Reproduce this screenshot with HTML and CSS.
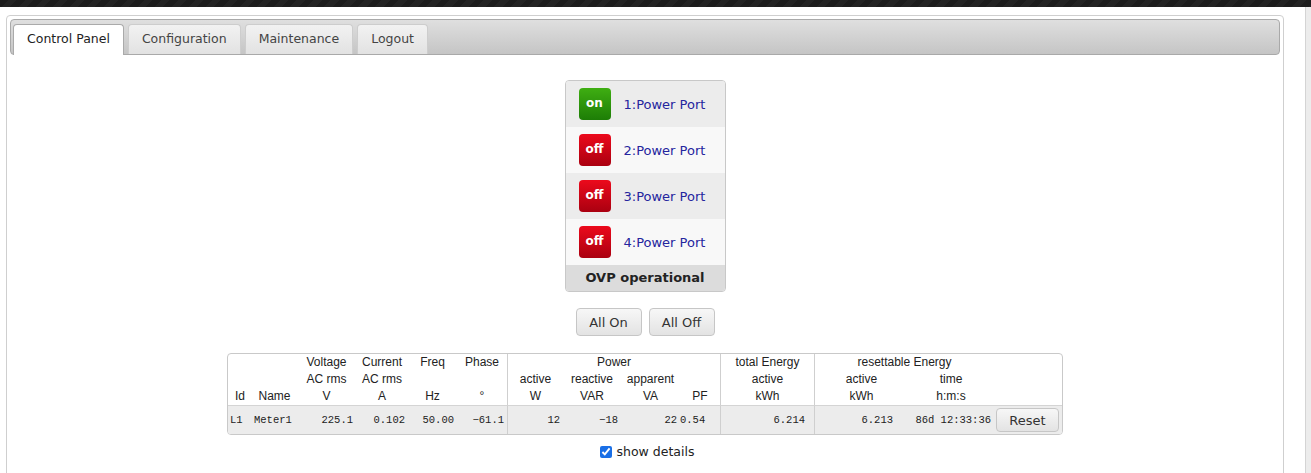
FILE: index.html
```html
<!DOCTYPE html>
<html>
<head>
<meta charset="utf-8">
<title>Control Panel</title>
<link rel="stylesheet" href="styles.css">
</head>
<body>
<div class="topbar"></div>
<div class="sidestrip"></div>
<div class="page">
  <ul class="tabnav">
    <li class="tab active">Control Panel</li>
    <li class="tab">Configuration</li>
    <li class="tab">Maintenance</li>
    <li class="tab">Logout</li>
  </ul>
  <div class="panel">
    <div class="ports">
      <div class="port odd"><span class="sw on">on</span><span class="pname">1:Power Port</span></div>
      <div class="port"><span class="sw off">off</span><span class="pname">2:Power Port</span></div>
      <div class="port odd"><span class="sw off">off</span><span class="pname">3:Power Port</span></div>
      <div class="port"><span class="sw off">off</span><span class="pname">4:Power Port</span></div>
      <div class="status">OVP operational</div>
    </div>
    <div class="allbtns">
      <button class="btn">All On</button>
      <button class="btn">All Off</button>
    </div>
    <div class="meter">
      <table class="mtable">
        <colgroup>
          <col class="c-id"><col class="c-name"><col class="c-v"><col class="c-a"><col class="c-hz"><col class="c-ph">
          <col class="c-w"><col class="c-var"><col class="c-va"><col class="c-pf">
          <col class="c-tot"><col class="c-rkwh"><col class="c-time"><col class="c-reset">
        </colgroup>
        <thead>
          <tr>
            <th></th><th></th><th>Voltage</th><th>Current</th><th>Freq</th><th>Phase</th>
            <th class="sep" colspan="4">Power</th>
            <th class="sep">total Energy</th>
            <th class="sep" colspan="2">resettable Energy</th>
            <th></th>
          </tr>
          <tr>
            <th></th><th></th><th>AC rms</th><th>AC rms</th><th></th><th></th>
            <th class="sep">active</th><th>reactive</th><th>apparent</th><th></th>
            <th class="sep">active</th>
            <th class="sep">active</th><th>time</th>
            <th></th>
          </tr>
          <tr>
            <th>Id</th><th>Name</th><th>V</th><th>A</th><th>Hz</th><th>°</th>
            <th class="sep">W</th><th>VAR</th><th>VA</th><th>PF</th>
            <th class="sep">kWh</th>
            <th class="sep">kWh</th><th>h:m:s</th>
            <th></th>
          </tr>
        </thead>
        <tbody>
          <tr>
            <td class="left">L1</td><td class="left">Meter1</td><td>225.1</td><td>0.102</td><td>50.00</td><td>&minus;61.1</td>
            <td class="sep">12</td><td>&minus;18</td><td>22</td><td class="pf">0.54</td>
            <td class="sep tot">6.214</td>
            <td class="sep rk">6.213</td><td>86d 12:33:36</td>
            <td class="left rs"><button class="btn reset">Reset</button></td>
          </tr>
        </tbody>
      </table>
    </div>
    <label class="details"><input type="checkbox" checked>show details</label>
  </div>
</div>
</body>
</html>
```

FILE: styles.css
```css
html, body {
  margin: 0;
  padding: 0;
  background: #fff;
  overflow: hidden;
}
body {
  font-family: "DejaVu Sans", Verdana, sans-serif;
  font-size: 13px;
  color: #222;
}
.topbar {
  height: 7px;
  background: repeating-linear-gradient(135deg, #1c1c1c 0 6px, #232323 6px 12px);
}
.sidestrip {
  position: fixed;
  top: 7px;
  right: 0;
  bottom: 0;
  width: 5px;
  background: #ececec;
  border-left: 1px solid #d4d4d4;
}
.page {
  margin: 8px 27px 0 6px;
  border: 1px solid #cfcfcf;
  border-radius: 4px;
  padding: 3px;
  min-height: 520px;
}
.tabnav {
  list-style: none;
  margin: 0;
  padding: 4px 2px 0;
  height: 30px;
  display: flex;
  align-items: flex-start;
  gap: 4px;
  border: 1px solid #a9a9a9;
  border-radius: 4px;
  background: linear-gradient(#dfdfdf, #c5c5c5);
}
.tab {
  box-sizing: border-box;
  height: 30px;
  padding: 0 13px;
  line-height: 28px;
  font-size: 12.5px;
  color: #444;
  border: 1px solid #cdcdcd;
  border-bottom: 0;
  border-radius: 4px 4px 0 0;
  background: linear-gradient(#f2f2f2, #e2e2e2);
}
.tab.active {
  height: 31px;
  color: #222;
  background: #fff;
  border-color: #aaa;
}
.panel {
  display: flex;
  flex-direction: column;
  align-items: center;
  padding-top: 25px;
}
.ports {
  box-sizing: border-box;
  width: 161px;
  border: 1px solid #c8c8c8;
  border-radius: 4px;
  overflow: hidden;
  background: #f8f8f8;
}
.port {
  box-sizing: border-box;
  height: 46px;
  display: flex;
  align-items: center;
  padding-left: 13px;
  background: #f8f8f8;
}
.port.odd {
  background: #ececec;
}
.sw {
  width: 32px;
  height: 32px;
  border-radius: 4px;
  display: flex;
  align-items: center;
  justify-content: center;
  color: #fff;
  font-weight: bold;
  font-size: 12px;
  margin-right: 13px;
  padding-bottom: 2px;
  box-sizing: border-box;
}
.sw.on {
  background: linear-gradient(#3fae12, #1d7d06);
}
.sw.off {
  background: linear-gradient(#ec0a1c, #aa0010);
}
.pname {
  color: #25259e;
  font-size: 13px;
}
.status {
  height: 26px;
  line-height: 26px;
  text-align: center;
  font-weight: bold;
  font-size: 13px;
  background: #dcdcdc;
  color: #222;
}
.allbtns {
  margin-top: 16px;
  display: flex;
  gap: 7px;
}
.btn {
  box-sizing: border-box;
  width: 66px;
  height: 28px;
  padding: 0;
  font-family: "DejaVu Sans", Verdana, sans-serif;
  font-size: 13px;
  color: #333;
  border: 1px solid #c6c6c6;
  border-radius: 4px;
  background: linear-gradient(#f7f7f7, #e3e3e3);
}
.meter {
  margin-top: 17px;
  box-sizing: border-box;
  width: 836px;
  border: 1px solid #c9c9c9;
  border-radius: 4px;
  overflow: hidden;
}
.mtable {
  width: 834px;
  table-layout: fixed;
  border-spacing: 0;
  border-collapse: separate;
}
.c-id { width: 24px; }
.c-name { width: 45px; }
.c-v { width: 59px; }
.c-a { width: 52px; }
.c-hz { width: 49px; }
.c-ph { width: 50px; }
.c-w { width: 56px; }
.c-var { width: 58px; }
.c-va { width: 59px; }
.c-pf { width: 40px; }
.c-tot { width: 94px; }
.c-rkwh { width: 94px; }
.c-time { width: 86px; }
.c-reset { width: 68px; }
.mtable th {
  font-family: "Liberation Sans", Arial, sans-serif;
  font-weight: normal;
  font-size: 12px;
  line-height: 17px;
  height: 17px;
  padding: 0;
  text-align: center;
  color: #222;
  white-space: nowrap;
}
.mtable td {
  font-family: "Liberation Mono", "Courier New", monospace;
  font-size: 10.5px;
  height: 28px;
  padding: 0 3px 0 0;
  text-align: right;
  white-space: nowrap;
  background: #ececec;
  border-top: 1px solid #d4d4d4;
  color: #222;
}
.mtable td.left {
  text-align: left;
  padding: 0 0 0 2px;
}
.mtable td.pf { padding-right: 15px; }
.mtable td.tot { padding-right: 9px; }
.mtable td.rk { padding-right: 15px; }
.mtable .sep {
  border-left: 1px solid #cfcfcf;
}
.btn.reset {
  width: 63px;
  height: 24px;
  display: block;
}
.details {
  margin-top: 9px;
  display: flex;
  align-items: center;
  font-size: 12.5px;
  color: #222;
}
.details input {
  width: 12px;
  height: 12px;
  margin: 0 5px 0 4px;
  accent-color: #1a6fe6;
}
```
